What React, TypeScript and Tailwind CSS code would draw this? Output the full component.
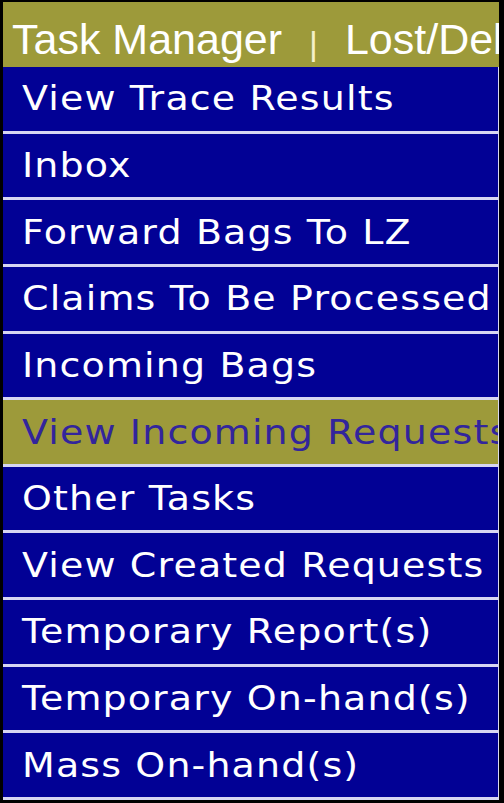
const items = [
  "View Trace Results",
  "Inbox",
  "Forward Bags To LZ",
  "Claims To Be Processed",
  "Incoming Bags",
  "View Incoming Requests",
  "Other Tasks",
  "View Created Requests",
  "Temporary Report(s)",
  "Temporary On-hand(s)",
  "Mass On-hand(s)",
];

const ACTIVE = "View Incoming Requests";

export default function App() {
  return (
    <div className="flex h-[803px] w-[504px] flex-col bg-black pt-[2px] pr-[5px] pb-[3px] pl-[3px]">
      <div className="flex h-[65px] shrink-0 items-center overflow-hidden whitespace-nowrap bg-[#9d9a3a] pt-[10px] pl-[9px] font-['Liberation_Sans',Arial,sans-serif] text-[43px] leading-none text-white">
        <span>Task Manager</span>
        <span className="mx-[27px] mt-[6px] text-[34px] text-[#f4f0c8]">|</span>
        <span>Lost/Delayed</span>
      </div>
      <div className="flex flex-1 flex-col border-r border-[#d8d8f2]">
        {items.map((label) => {
          const active = label === ACTIVE;
          return (
            <div
              key={label}
              className={`flex flex-1 items-center overflow-hidden whitespace-nowrap border-b-[3px] border-[#d6d6f2] pl-[19px] font-['DejaVu_Sans',Verdana,sans-serif] text-[33px] leading-none tracking-[1px] ${
                active ? "bg-[#9d9a3a] text-[#32259c]" : "bg-[#020195] text-white"
              }`}
            >
              <span className="inline-block origin-left scale-x-[1.15]">{label}</span>
            </div>
          );
        })}
      </div>
    </div>
  );
}
